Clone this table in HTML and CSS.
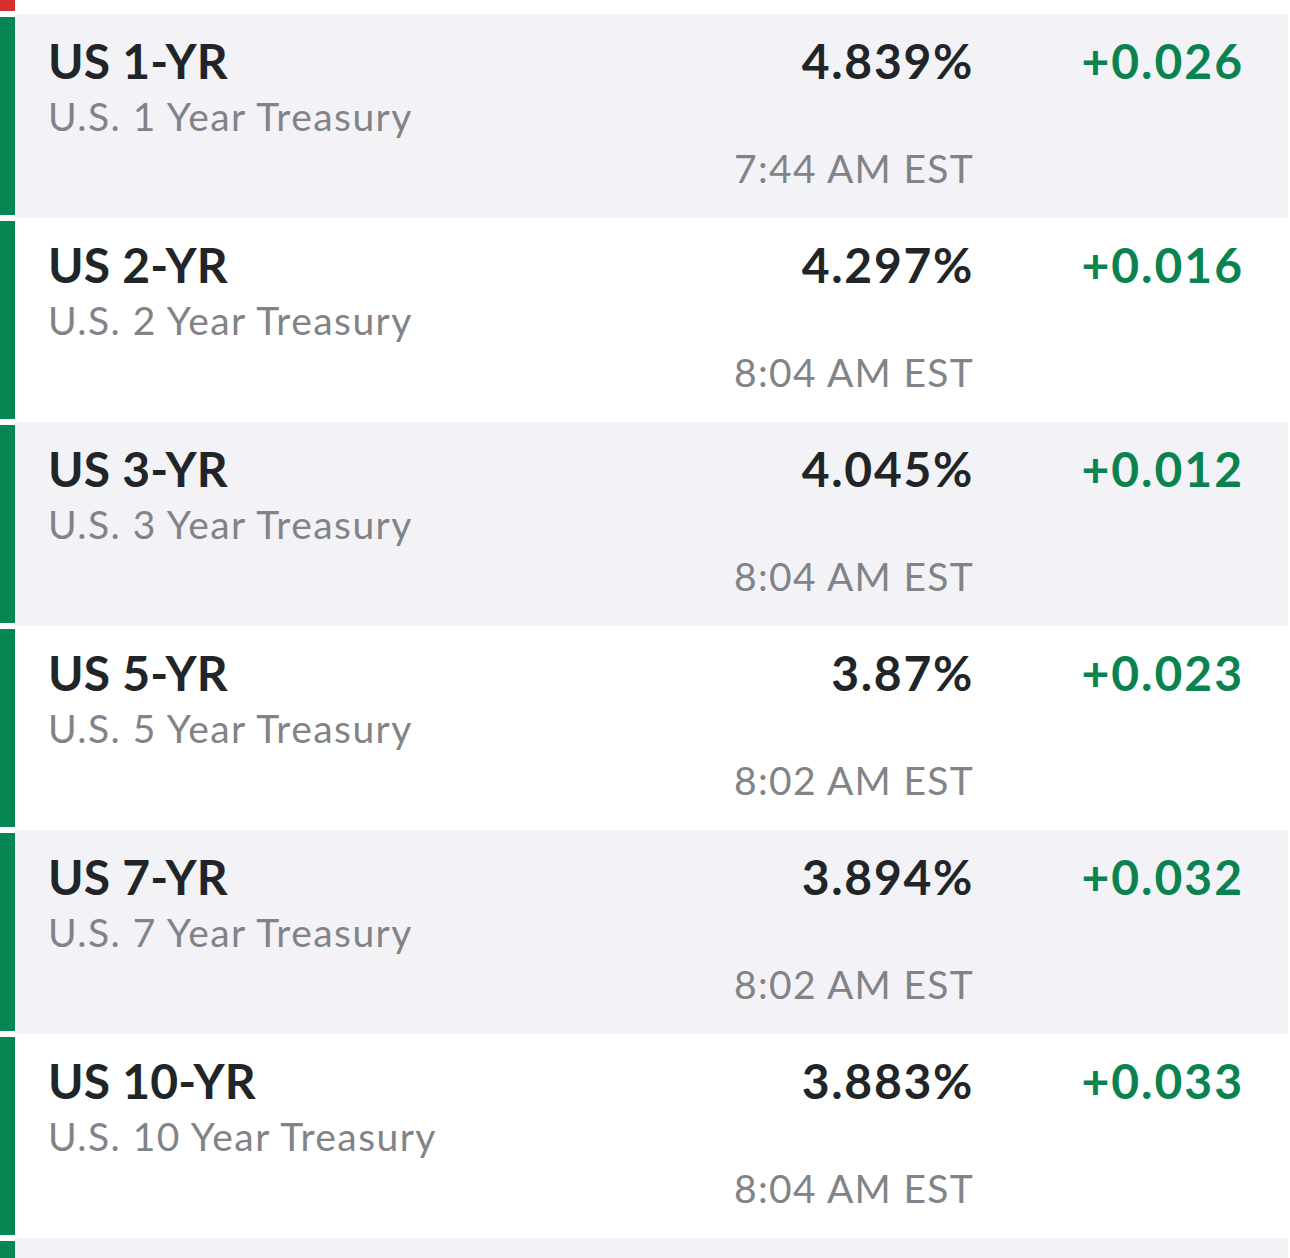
FILE: index.html
```html
<!DOCTYPE html>
<html lang="en">
<head>
<meta charset="utf-8">
<title>US Treasuries</title>
<link rel="stylesheet" href="styles.css">
</head>
<body>
<ul class="quotes">
  <li class="quote quote--partial quote--head quote--down"></li>
  <li class="quote quote--shaded">
    <div class="quote__name">
      <span class="quote__symbol">US 1-YR</span>
      <span class="quote__desc">U.S. 1 Year Treasury</span>
    </div>
    <span class="quote__value">4.839%</span>
    <span class="quote__change">+0.026</span>
    <span class="quote__time">7:44 AM EST</span>
  </li>
  <li class="quote">
    <div class="quote__name">
      <span class="quote__symbol">US 2-YR</span>
      <span class="quote__desc">U.S. 2 Year Treasury</span>
    </div>
    <span class="quote__value">4.297%</span>
    <span class="quote__change">+0.016</span>
    <span class="quote__time">8:04 AM EST</span>
  </li>
  <li class="quote quote--shaded">
    <div class="quote__name">
      <span class="quote__symbol">US 3-YR</span>
      <span class="quote__desc">U.S. 3 Year Treasury</span>
    </div>
    <span class="quote__value">4.045%</span>
    <span class="quote__change">+0.012</span>
    <span class="quote__time">8:04 AM EST</span>
  </li>
  <li class="quote">
    <div class="quote__name">
      <span class="quote__symbol">US 5-YR</span>
      <span class="quote__desc">U.S. 5 Year Treasury</span>
    </div>
    <span class="quote__value">3.87%</span>
    <span class="quote__change">+0.023</span>
    <span class="quote__time">8:02 AM EST</span>
  </li>
  <li class="quote quote--shaded">
    <div class="quote__name">
      <span class="quote__symbol">US 7-YR</span>
      <span class="quote__desc">U.S. 7 Year Treasury</span>
    </div>
    <span class="quote__value">3.894%</span>
    <span class="quote__change">+0.032</span>
    <span class="quote__time">8:02 AM EST</span>
  </li>
  <li class="quote">
    <div class="quote__name">
      <span class="quote__symbol">US 10-YR</span>
      <span class="quote__desc">U.S. 10 Year Treasury</span>
    </div>
    <span class="quote__value">3.883%</span>
    <span class="quote__change">+0.033</span>
    <span class="quote__time">8:04 AM EST</span>
  </li>
  <li class="quote quote--shaded quote--partial quote--tail"></li>
</ul>
</body>
</html>
```

FILE: styles.css
```css
html, body {
  margin: 0;
  padding: 0;
  background: #ffffff;
}

body {
  font-family: "Lato", "Open Sans", sans-serif;
  width: 1290px;
  height: 1258px;
  overflow: hidden;
}

.quotes {
  list-style: none;
  margin: 0;
  padding: 0;
  width: 1288px;
}

.quote {
  position: relative;
  height: 204px;
  box-sizing: border-box;
  display: grid;
  grid-template-columns: 1fr auto 270px;
  grid-template-rows: auto 1fr;
  padding: 19px 44px 0 48px;
  background: #ffffff;
}

.quote::before {
  content: "";
  position: absolute;
  left: 0;
  top: 3px;
  bottom: 3px;
  width: 15px;
  background: #078552;
}

.quote--shaded {
  background: linear-gradient(to right, #ffffff 0 15px, #f3f3f7 15px);
}

.quote--partial {
  height: 14px;
  padding: 0;
}

.quote--head::before {
  top: 0;
}

.quote--tail {
  height: 20px;
}

.quote--tail::before {
  bottom: 0;
}

.quote--down::before {
  background: #d62f2f;
}

.quote__name {
  grid-column: 1;
  grid-row: 1 / 3;
  display: flex;
  flex-direction: column;
}

.quote__symbol {
  font-size: 48px;
  font-weight: 700;
  color: #222528;
  line-height: 56px;
  letter-spacing: 0.2px;
}

.quote__desc {
  font-size: 39px;
  font-weight: 400;
  color: #818386;
  line-height: 48px;
  margin-top: 3px;
  letter-spacing: 1.45px;
}

.quote__value {
  grid-column: 2;
  grid-row: 1;
  font-size: 48px;
  font-weight: 700;
  color: #222528;
  line-height: 56px;
  text-align: right;
  letter-spacing: 1.7px;
}

.quote__change {
  grid-column: 3;
  grid-row: 1;
  font-size: 48px;
  font-weight: 700;
  color: #0b8350;
  line-height: 56px;
  text-align: right;
  letter-spacing: 2px;
}

.quote__time {
  grid-column: 2;
  grid-row: 2;
  justify-self: end;
  font-size: 39px;
  color: #818386;
  line-height: 48px;
  margin-top: 55px;
  letter-spacing: 1.3px;
  white-space: nowrap;
}
```
